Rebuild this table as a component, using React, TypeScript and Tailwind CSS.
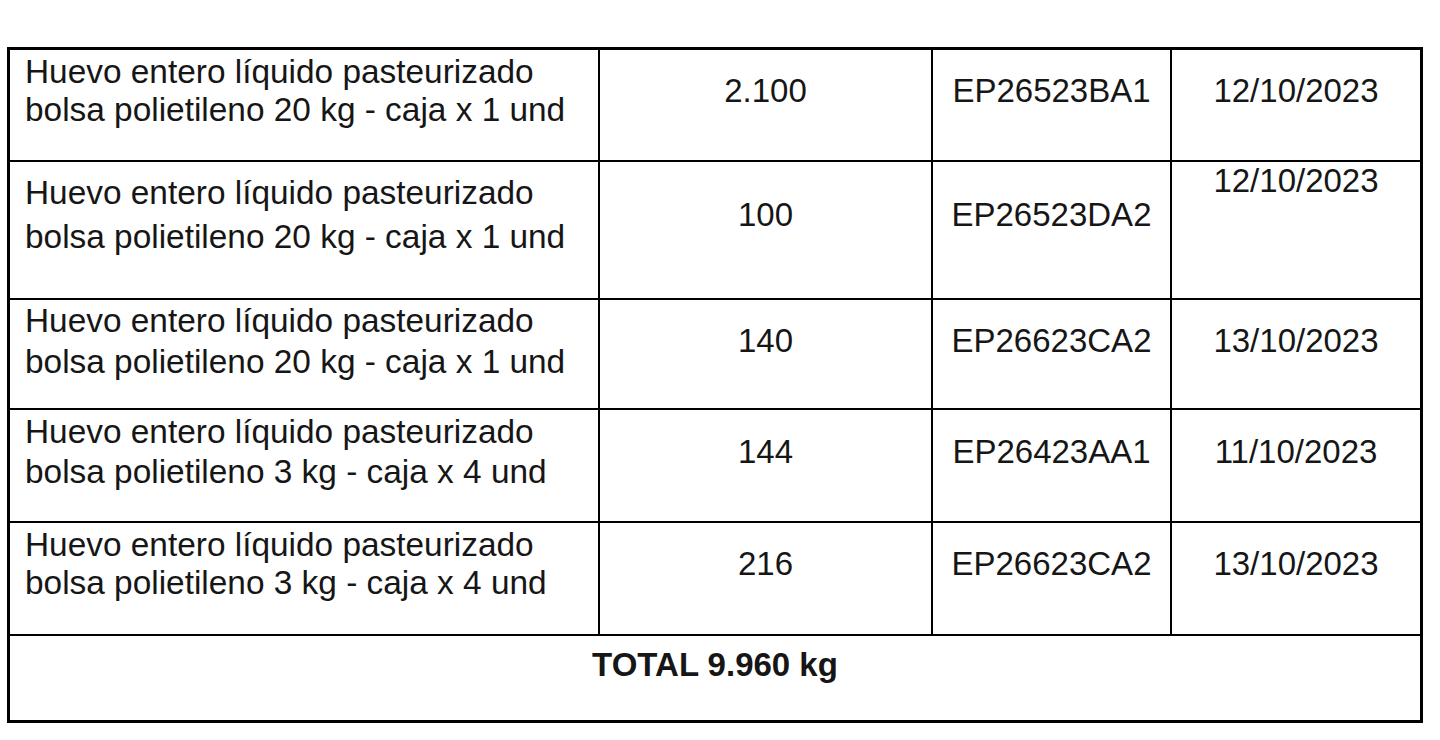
const rows = [
  { h: 'h-[110px]', descPt: 'pt-[3px]', lh: 'leading-[38px]', midPt: 'pt-[22px]', datePt: 'pt-[22px]', size: '20 kg - caja x 1 und', qty: '2.100', lot: 'EP26523BA1', date: '12/10/2023' },
  { h: 'h-[138px]', descPt: 'pt-[9px]', lh: 'leading-[44px]', midPt: 'pt-[34px]', datePt: 'pt-0', size: '20 kg - caja x 1 und', qty: '100', lot: 'EP26523DA2', date: '12/10/2023' },
  { h: 'h-[110px]', descPt: 'pt-0', lh: 'leading-[41px]', midPt: 'pt-[22px]', datePt: 'pt-[22px]', size: '20 kg - caja x 1 und', qty: '140', lot: 'EP26623CA2', date: '13/10/2023' },
  { h: 'h-[113px]', descPt: 'pt-[2px]', lh: 'leading-[40px]', midPt: 'pt-[23px]', datePt: 'pt-[23px]', size: '3 kg - caja x 4 und', qty: '144', lot: 'EP26423AA1', date: '11/10/2023' },
  { h: 'h-[113px]', descPt: 'pt-[3px]', lh: 'leading-[38px]', midPt: 'pt-[22px]', datePt: 'pt-[22px]', size: '3 kg - caja x 4 und', qty: '216', lot: 'EP26623CA2', date: '13/10/2023' },
];

export default function App() {
  return (
    <div className="w-[1440px] h-[740px] bg-white pt-[47px] pl-[7px] text-[33px] text-[#161616] font-['Liberation_Sans',Arial,sans-serif]">
      <div className="w-[1416px] border-[3px] border-black">
        {rows.map((r, i) => (
          <div key={i} className={`flex ${r.h} ${i > 0 ? 'border-t-2 border-black' : ''}`}>
            <div className={`w-[588px] pl-[15px] text-[33.4px] ${r.descPt} ${r.lh} whitespace-nowrap`}>
              <div>Huevo entero líquido pasteurizado</div>
              <div>bolsa polietileno {r.size}</div>
            </div>
            <div className={`w-[333px] border-l-2 border-black text-center leading-[38px] ${r.midPt}`}>
              {r.qty}
            </div>
            <div className={`w-[239px] border-l-2 border-black text-center leading-[38px] ${r.midPt}`}>
              {r.lot}
            </div>
            <div className={`flex-1 border-l-2 border-black text-center leading-[38px] ${r.datePt}`}>
              {r.date}
            </div>
          </div>
        ))}
        <div className="h-[86px] border-t-2 border-black pt-[10px] text-center font-bold leading-[38px]">
          TOTAL 9.960 kg
        </div>
      </div>
    </div>
  );
}
